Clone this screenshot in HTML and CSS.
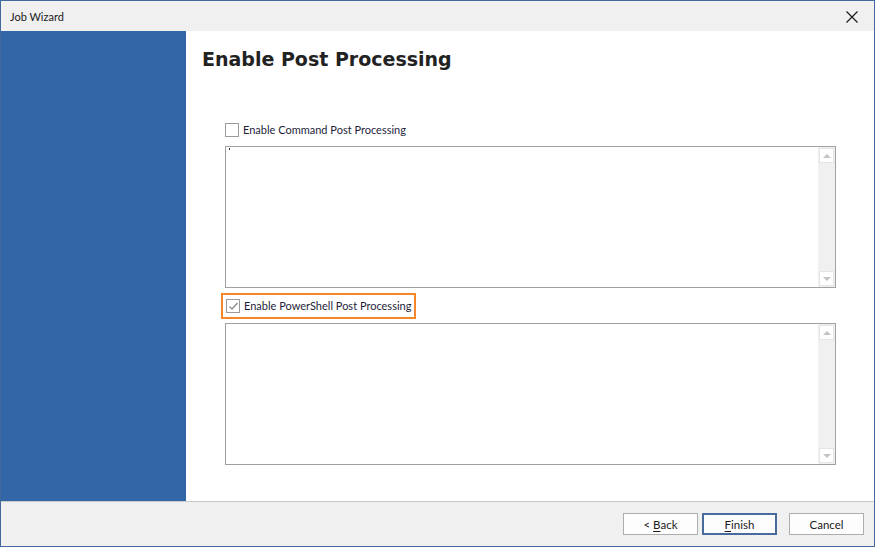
FILE: index.html
```html
<!DOCTYPE html>
<html>
<head>
<meta charset="utf-8">
<title>Job Wizard</title>
<link rel="stylesheet" href="styles.css">
</head>
<body>
<div class="window">
  <div class="titlebar">
    <span class="title">Job Wizard</span>
    <span class="close">
      <svg width="12" height="12" viewBox="0 0 12 12"><path d="M0.5 0.5 L11.5 11.5 M11.5 0.5 L0.5 11.5" stroke="#1a1a1a" stroke-width="1.2" fill="none"/></svg>
    </span>
  </div>
  <div class="main">
    <div class="sidebar"></div>
    <div class="content">
      <h1 class="heading">Enable Post Processing</h1>

      <div class="option first">
        <label class="check">
          <span class="box"></span>
          <span class="label">Enable Command Post Processing</span>
        </label>
      </div>
      <div class="editor">
        <div class="text"><span class="caret"></span></div>
        <div class="scrollbar">
          <span class="arrow up"></span>
          <span class="arrow down"></span>
        </div>
      </div>

      <div class="option second">
        <label class="check focused">
          <span class="box">
            <svg width="11" height="11" viewBox="0 0 11 11"><path d="M1.5 5.5 L4 8 L9.5 2" stroke="#8a8a8a" stroke-width="1.3" fill="none"/></svg>
          </span>
          <span class="label">Enable PowerShell Post Processing</span>
        </label>
      </div>
      <div class="editor last">
        <div class="text"></div>
        <div class="scrollbar">
          <span class="arrow up"></span>
          <span class="arrow down"></span>
        </div>
      </div>
    </div>
  </div>
  <div class="footer">
    <button class="btn">&lt; <u>B</u>ack</button>
    <button class="btn default"><u>F</u>inish</button>
    <button class="btn cancel">Cancel</button>
  </div>
</div>
</body>
</html>
```

FILE: styles.css
```css
html, body {
  margin: 0;
  padding: 0;
  background: #ffffff;
}

.window {
  box-sizing: border-box;
  width: 875px;
  height: 547px;
  border: 1px solid #41689f;
  display: flex;
  flex-direction: column;
  font-family: Lato, "Noto Sans", sans-serif;
  font-size: 11px;
  color: #1e1e2e;
}

.titlebar {
  height: 30px;
  background: #f0f0f0;
  display: flex;
  align-items: center;
  justify-content: space-between;
  padding: 0 16px 0 9px;
}

.title {
  font-size: 11px;
  color: #1a1a1a;
}

.close {
  display: flex;
  margin-top: 1px;
}

.main {
  flex: 1;
  display: flex;
  min-height: 0;
}

.sidebar {
  width: 185px;
  background: #3266a6;
}

.content {
  flex: 1;
  background: #ffffff;
  padding-left: 17px;
}

.heading {
  margin: 14px 0 0 -1px;
  font-family: "DejaVu Sans", Verdana, sans-serif;
  font-weight: bold;
  font-size: 19px;
  line-height: 28px;
  color: #222222;
}

/* checkbox rows */
.option {
  padding-left: 22px;
  display: flex;
}

.option.first {
  margin-top: 50px;
  height: 23px;
  align-items: flex-start;
}

.option.second {
  margin-top: 5px;
  height: 26px;
  align-items: center;
  padding-left: 18px;
}

.check {
  display: flex;
  align-items: center;
  gap: 4px;
  height: 14px;
  box-sizing: border-box;
}

.check.focused {
  border: 2px solid #f5862a;
  padding: 0 3px 0 3px;
  height: 26px;
}

.box {
  box-sizing: border-box;
  width: 14px;
  height: 14px;
  border: 1px solid #9a9a9a;
  background: #ffffff;
  display: flex;
  align-items: center;
  justify-content: center;
}

.label {
  font-size: 11px;
  color: #1e1e3a;
  line-height: 14px;
}

/* multi-line text boxes */
.editor {
  box-sizing: border-box;
  width: 611px;
  height: 142px;
  margin-left: 22px;
  border: 1px solid #a0a0a0;
  display: flex;
}

.editor.last {
  margin-top: 4px;
}

.text {
  flex: 1;
  position: relative;
}

.caret {
  position: absolute;
  left: 3px;
  top: 1px;
  width: 1px;
  height: 2px;
  background: #333333;
}

.scrollbar {
  width: 17px;
  background: #f0f0f0;
  display: flex;
  flex-direction: column;
  justify-content: space-between;
  padding: 1px;
  box-sizing: border-box;
}

.arrow {
  box-sizing: border-box;
  width: 15px;
  height: 15px;
  background: #ffffff;
  border: 1px solid #e4e4e4;
  display: flex;
  align-items: center;
  justify-content: center;
}

.arrow::after {
  content: "";
  width: 0;
  height: 0;
  border-left: 4px solid transparent;
  border-right: 4px solid transparent;
}

.arrow.up::after {
  border-bottom: 4px solid #c4c4c4;
}

.arrow.down::after {
  border-top: 4px solid #c4c4c4;
}

.footer {
  height: 44px;
  border-top: 1px solid #c9c9c9;
  background: #f0f0f0;
  display: flex;
  align-items: center;
  justify-content: flex-end;
  padding-right: 10px;
  gap: 4px;
}

.btn {
  box-sizing: border-box;
  width: 75px;
  height: 22px;
  background: #fdfdfd;
  border: 1px solid #adadad;
  border-radius: 0;
  font-family: Lato, "Noto Sans", sans-serif;
  font-size: 11.5px;
  color: #1a1a1a;
  padding: 0;
}

.btn u {
  text-underline-offset: 2px;
}

.btn.default {
  border: 2px solid #4a6a9e;
}

.btn.cancel {
  margin-left: 8px;
}
```
